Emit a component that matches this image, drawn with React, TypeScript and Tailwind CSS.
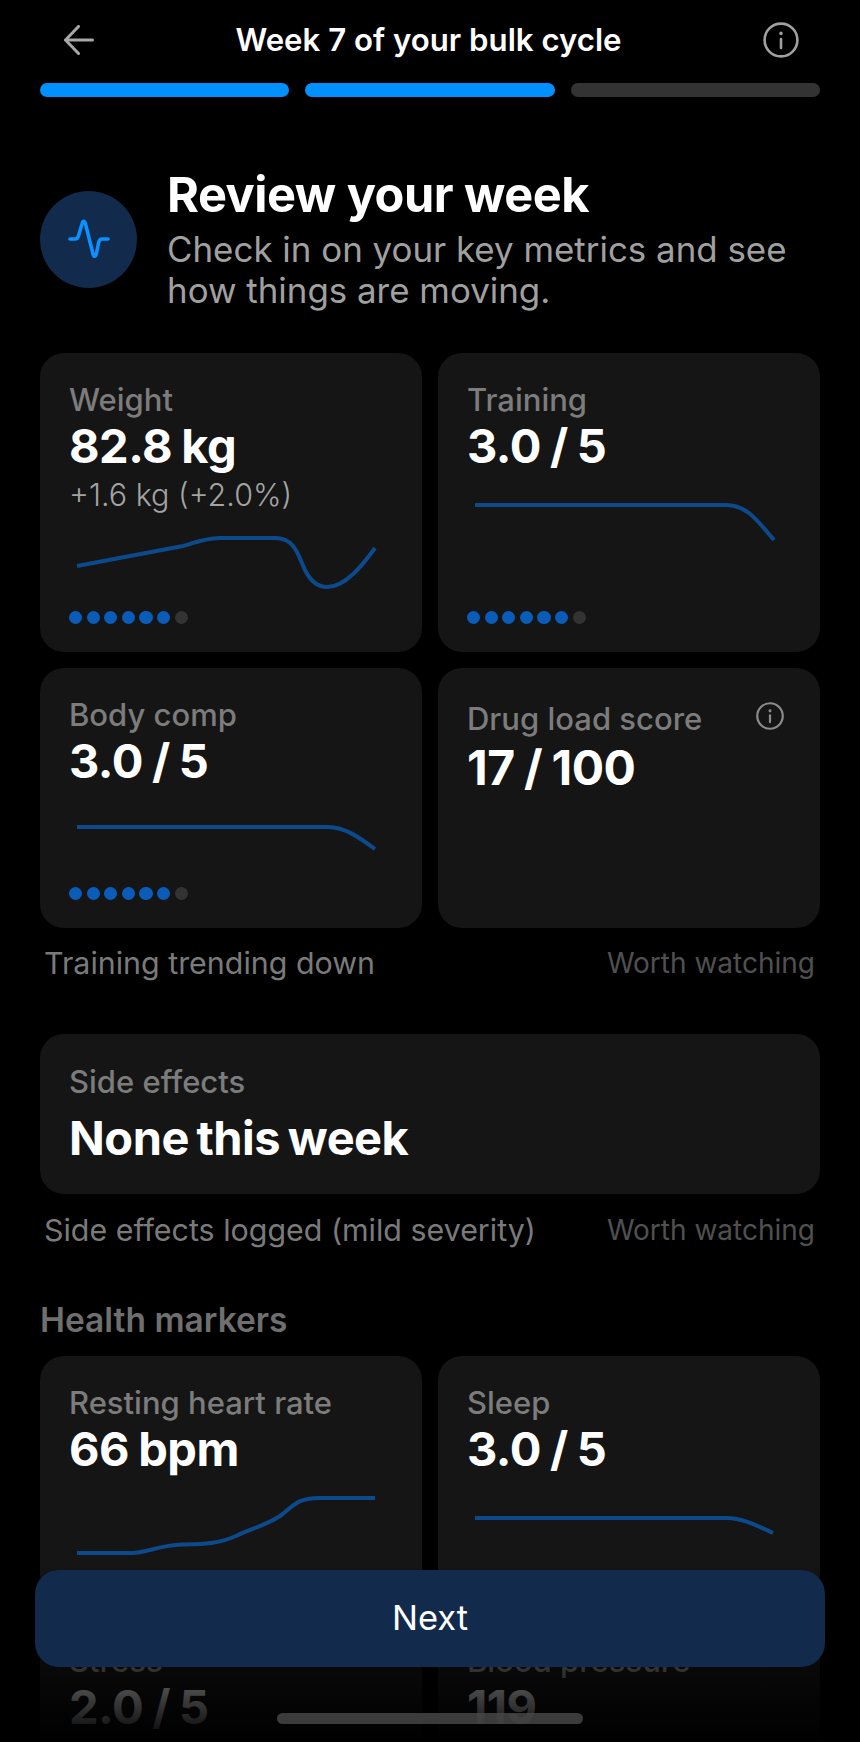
import { ReactNode } from 'react'

const font = { fontFamily: 'Inter, sans-serif' }

function Dots() {
  return (
    <div className="mt-auto flex gap-[4.3px]">
      {[0, 1, 2, 3, 4, 5].map((i) => (
        <div key={i} className="size-[13.3px] rounded-full bg-[#0a5cb8]" />
      ))}
      <div className="size-[13.3px] rounded-full bg-[#333333]" />
    </div>
  )
}

function Spark({ d, h, className }: { d: string; h: number; className: string }) {
  return (
    <svg width="322" height={h} viewBox={`-1 0 322 ${h}`} fill="none" className={`block shrink-0 ${className}`}>
      <path d={d} stroke="#0d4a8c" strokeWidth="4" />
    </svg>
  )
}

function InfoIcon({ size, color, stroke }: { size: number; color: string; stroke: number }) {
  return (
    <svg width={size} height={size} viewBox="0 0 36 36" fill="none" stroke={color} strokeWidth={stroke} strokeLinecap="round">
      <circle cx="18" cy="18" r="16.4" />
      <path d="M18 17v9" />
      <path d="M18 11.2v.4" strokeWidth={stroke + 0.8} />
    </svg>
  )
}

function Card({ h, label, value, children }: { h: string; label: string; value: string; children?: ReactNode }) {
  return (
    <div className={`flex flex-col rounded-[24px] bg-[#151515] pt-[30px] pr-[30px] pb-[28px] pl-[29px] ${h}`}>
      <div className="text-[31px] leading-[34px] font-medium text-[#7c7c7c]">{label}</div>
      <div className="mt-[4px] text-[47px] leading-[50px] font-bold tracking-[-0.5px] [word-spacing:-1.5px] text-white">{value}</div>
      {children}
    </div>
  )
}

function Caption({ left, className }: { left: string; className: string }) {
  return (
    <div className={`flex items-center justify-between pr-[45px] pl-[44px] ${className}`}>
      <span className="text-[30.4px] leading-[40px] text-[#7a7a7a]">{left}</span>
      <span className="text-[28px] leading-[40px] text-[#505050]">Worth watching</span>
    </div>
  )
}

export default function App() {
  return (
    <div style={font} className="relative h-[1742px] w-[860px] overflow-hidden bg-black">
      {/* Header */}
      <div className="flex h-[80px] items-center justify-between pr-[61px] pl-[64px]">
        <svg width="30" height="30" viewBox="0 0 30 30" fill="none" stroke="#a8a8a8" strokeWidth="3" strokeLinecap="round" strokeLinejoin="round">
          <path d="M28.500 15H2" />
          <path d="M14.500 1.500 1.500 15l13 13.500" />
        </svg>
        <div className="text-[31.200px] leading-[40px] font-semibold text-white">Week 7 of your bulk cycle</div>
        <InfoIcon size={36} color="#a0a0a0" stroke={2.6} />
      </div>

      {/* Progress */}
      <div className="mt-[3px] flex gap-[16px] px-[40px]">
        <div className="h-[14px] flex-1 rounded-full bg-[#0091ff]" />
        <div className="h-[14px] flex-1 rounded-full bg-[#0091ff]" />
        <div className="h-[14px] flex-1 rounded-full bg-[#333333]" />
      </div>

      {/* Intro */}
      <div className="mt-[72px] flex items-center gap-[30px] px-[40px]">
        <div className="-mt-[2px] flex size-[97px] shrink-0 items-center justify-center rounded-full bg-[#122a4b]">
          <svg width="42" height="40" viewBox="0 0 42 40" fill="none" stroke="#0a91ff" strokeWidth="3.6" strokeLinecap="round" strokeLinejoin="round">
            <path d="M2 20h5c2 0 3-1 3.600-3.500L14 5c.8-3.500 2.600-3.500 3.500 0L25 35c.8 3 2.500 3 3.300 0l2.200-11c.7-3 1.500-4 3.500-4h6" />
          </svg>
        </div>
        <div>
          <h1 className="text-[48.700px] leading-[52px] font-bold tracking-[-0.5px] text-white">Review your week</h1>
          <p className="mt-[8px] text-[34.900px] leading-[41px] text-[#a0a0a0]">
            Check in on your key metrics and see
            <br />
            how things are moving.
          </p>
        </div>
      </div>

      {/* Key metrics */}
      <div className="mt-[42px] grid grid-cols-2 gap-[16px] px-[40px]">
        <Card h="h-[299px]" label="Weight" value="82.8 kg">
          <div className="mt-[7px] text-[30.500px] leading-[34px] font-light text-[#a3a3a3]">+1.6 kg (+2.0%)</div>
          <Spark
            h={62}
            className="mt-[18px]"
            d="M7 36 L113 16 C125 13 130 9 150 8 H205 C225 8 228 25 235 40 C242 54 250 57 257 57 C275 57 292 36 305 18"
          />
          <Dots />
        </Card>
        <Card h="h-[299px]" label="Training" value="3.0 / 5">
          <Spark h={46} className="mt-[29px]" d="M7 5 H258 C280 5 290 22 306 40" />
          <Dots />
        </Card>
        <Card h="h-[260px]" label="Body comp" value="3.0 / 5">
          <Spark h={34} className="mt-[34px]" d="M7 7 H258 C275 7 290 18 305 29" />
          <Dots />
        </Card>
        <div className="flex h-[260px] flex-col rounded-[24px] bg-[#151515] pt-[34px] pr-[36px] pl-[29px]">
          <div className="flex items-start justify-between">
            <div className="text-[31px] leading-[34px] font-medium text-[#7c7c7c]">Drug load score</div>
            <InfoIcon size={28} color="#8c8c8c" stroke={2.8} />
          </div>
          <div className="mt-[7px] text-[48px] leading-[50px] font-bold tracking-[-0.5px] [word-spacing:-1.5px] text-white">17 / 100</div>
        </div>
      </div>
      <Caption left="Training trending down" className="mt-[15px]" />

      {/* Side effects */}
      <div className="mx-[40px] mt-[51px] h-[160px] rounded-[24px] bg-[#151515] pt-[31px] pr-[30px] pl-[29px]">
        <div className="text-[31px] leading-[34px] font-medium text-[#7c7c7c]">Side effects</div>
        <div className="mt-[14px] text-[47px] leading-[50px] font-bold tracking-[-0.5px] [word-spacing:-3px] text-white">None this week</div>
      </div>
      <Caption left="Side effects logged (mild severity)" className="mt-[16px]" />

      {/* Health markers */}
      <div className="mt-[50px] pl-[40px] text-[33.500px] leading-[40px] font-semibold text-[#6f6f6f]">Health markers</div>
      <div className="mt-[16px] grid grid-cols-2 gap-[16px] px-[40px]">
        <Card h="h-[242px]" label="Resting heart rate" value="66 bpm">
          <Spark
            h={70}
            className="mt-[16px]"
            d="M7 63 H62 C76 63 90 55 112 54.500 C132 54 148 54 166 46 C182 38 195 36 210 26 C224 16 226 8 250 8 H305"
          />
        </Card>
        <Card h="h-[242px]" label="Sleep" value="3.0 / 5">
          <Spark h={50} className="mt-[16px]" d="M7 28 H258 C275 28 290 36 305 43" />
        </Card>
        <Card h="h-[242px]" label="Stress" value="2.0 / 5" />
        <Card h="h-[242px]" label="Blood pressure" value="119" />
      </div>

      {/* Bottom fade, button, home indicator */}
      <div className="absolute inset-x-0 bottom-0 h-[180px] bg-gradient-to-b from-transparent to-black" />
      <div className="absolute top-[1570px] left-[35px] flex h-[97px] w-[790px] items-center justify-center rounded-[24px] bg-[#122a4b] pb-[2px] text-[34.500px] text-white">
        Next
      </div>
      <div className="absolute top-[1713px] left-[277px] h-[11px] w-[306px] rounded-full bg-[#4a4a4a]/80" />
    </div>
  )
}
